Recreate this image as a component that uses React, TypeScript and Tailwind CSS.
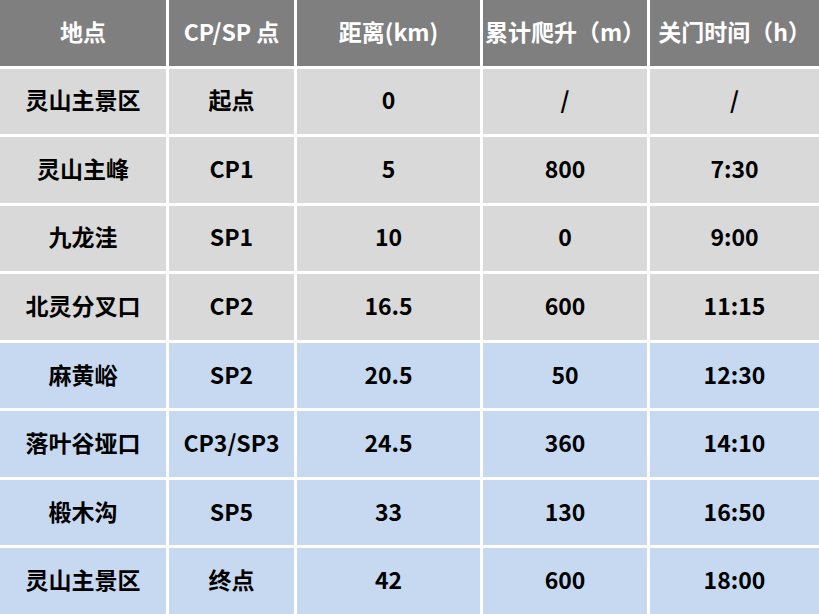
import React from "react";

const header = ["地点", "CP/SP 点", "距离(km)", "累计爬升（m）", "关门时间（h）"];
const rows: { cells: string[]; blue: boolean }[] = [
  { cells: ["灵山主景区", "起点", "0", "/", "/"], blue: false },
  { cells: ["灵山主峰", "CP1", "5", "800", "7:30"], blue: false },
  { cells: ["九龙洼", "SP1", "10", "0", "9:00"], blue: false },
  { cells: ["北灵分叉口", "CP2", "16.5", "600", "11:15"], blue: false },
  { cells: ["麻黄峪", "SP2", "20.5", "50", "12:30"], blue: true },
  { cells: ["落叶谷垭口", "CP3/SP3", "24.5", "360", "14:10"], blue: true },
  { cells: ["椴木沟", "SP5", "33", "130", "16:50"], blue: true },
  { cells: ["灵山主景区", "终点", "42", "600", "18:00"], blue: true },
];

export default function App() {
  return (
    <div
      className="w-[819px] h-[614px] bg-white grid grid-cols-[166px_125px_183px_164px_1fr] grid-rows-[repeat(9,1fr)] gap-[3px] overflow-hidden font-bold text-[23px]"
      style={{ fontFamily: '"Noto Sans CJK SC", "Noto Sans", sans-serif' }}
    >
      {header.map((h, i) => (
        <div key={"h" + i} className="bg-[#7f7f7f] text-white flex items-center justify-center leading-none pb-[3px]">
          {h}
        </div>
      ))}
      {rows.map((r, ri) =>
        r.cells.map((c, ci) => (
          <div
            key={ri + "-" + ci}
            className={
              (r.blue ? "bg-[#c6d9f0]" : "bg-[#d9d9d9]") +
              " text-black flex items-center justify-center leading-none pb-[3px]"
            }
          >
            {c}
          </div>
        ))
      )}
    </div>
  );
}
